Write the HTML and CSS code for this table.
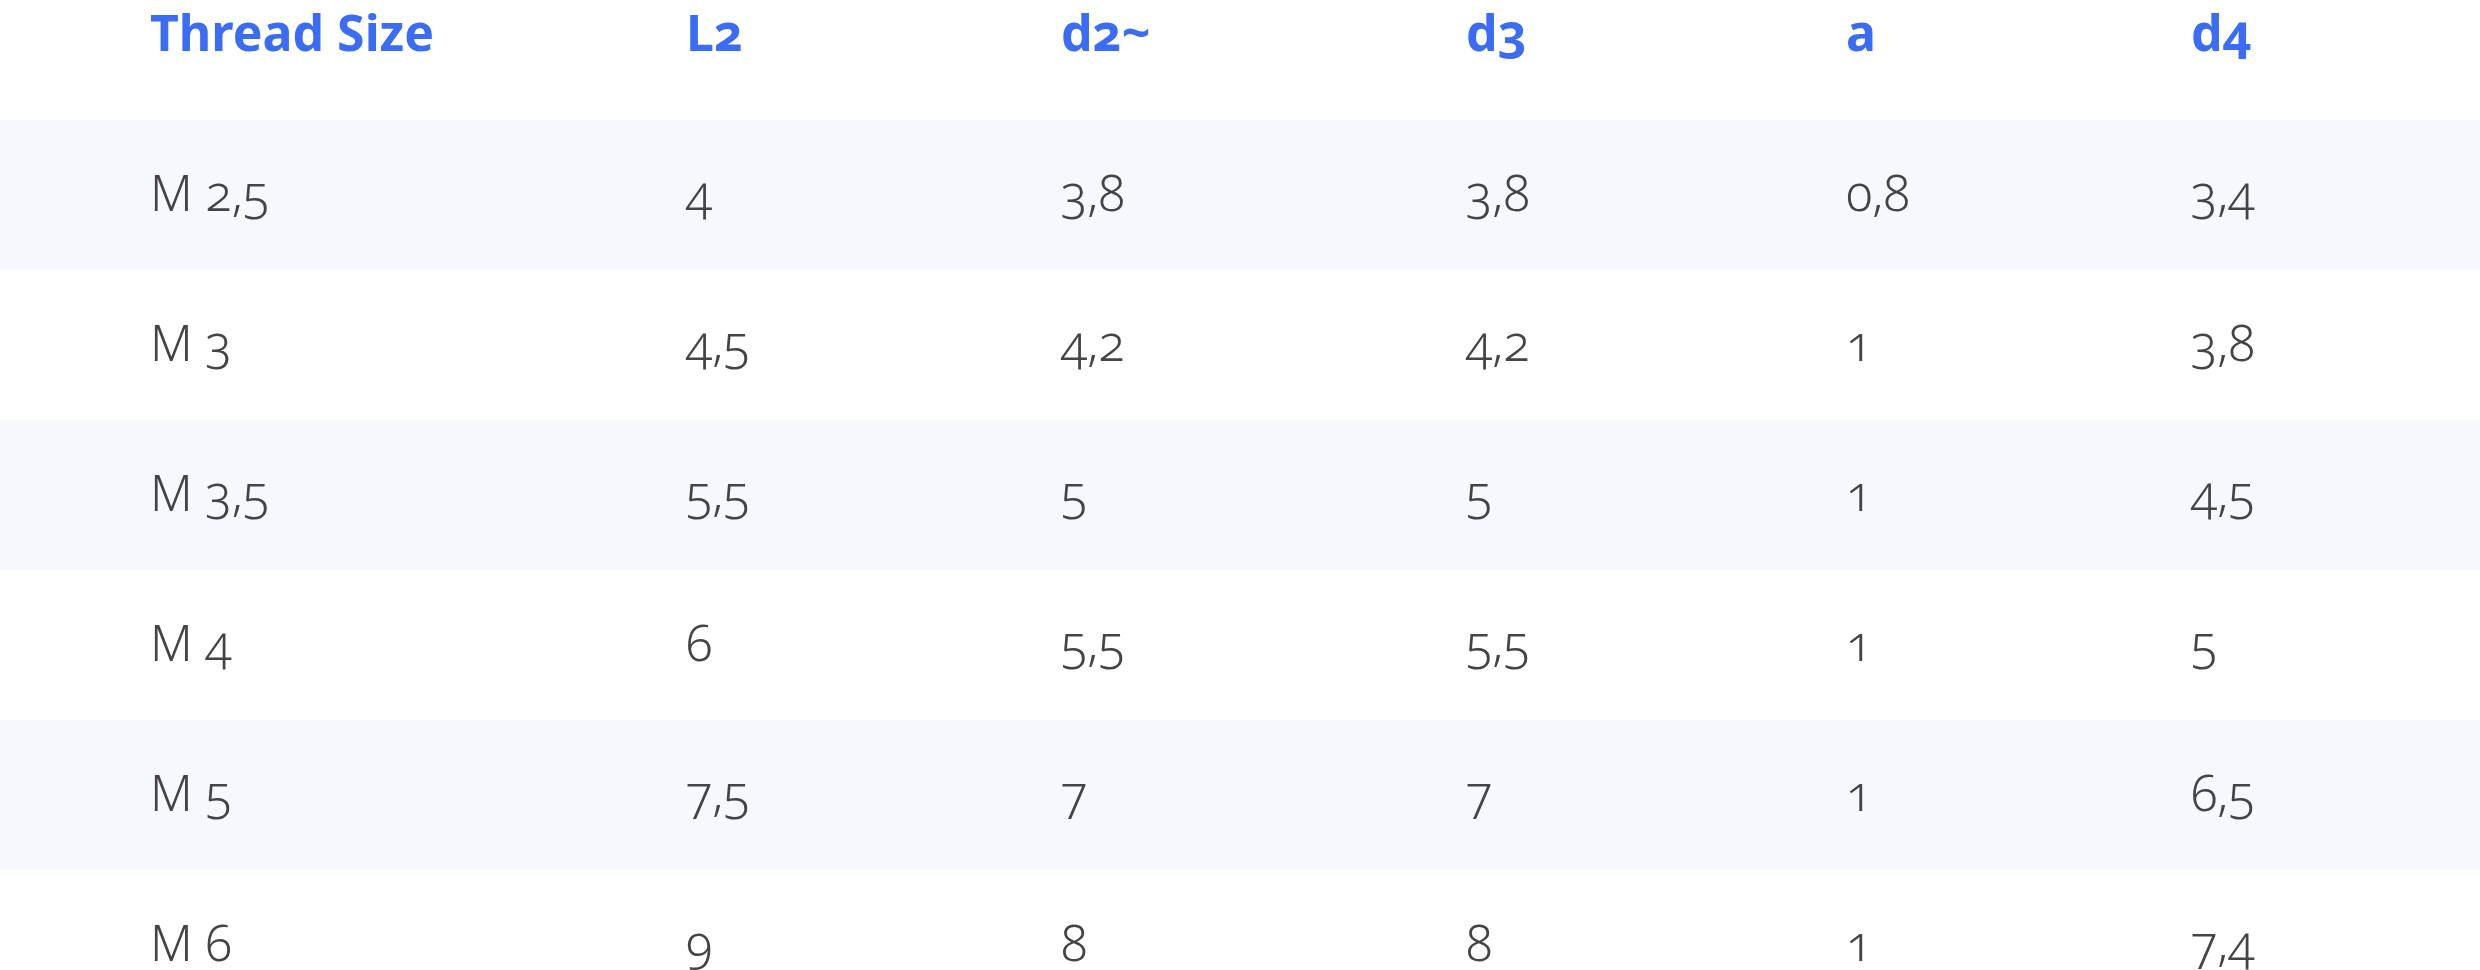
FILE: index.html
```html
<!DOCTYPE html>
<html>
<head>
<meta charset="utf-8">
<link rel="stylesheet" href="styles.css">
</head>
<body>
<div class="table">
  <div class="row head">
    <div class="cell">Thread Size</div>
    <div class="cell">L2</div>
    <div class="cell">d2~</div>
    <div class="cell">d3</div>
    <div class="cell">a</div>
    <div class="cell">d4</div>
  </div>
  <div class="row odd">
    <div class="cell">M 2,5</div><div class="cell">4</div><div class="cell">3,8</div><div class="cell">3,8</div><div class="cell">0,8</div><div class="cell">3,4</div>
  </div>
  <div class="row">
    <div class="cell">M 3</div><div class="cell">4,5</div><div class="cell">4,2</div><div class="cell">4,2</div><div class="cell">1</div><div class="cell">3,8</div>
  </div>
  <div class="row odd">
    <div class="cell">M 3,5</div><div class="cell">5,5</div><div class="cell">5</div><div class="cell">5</div><div class="cell">1</div><div class="cell">4,5</div>
  </div>
  <div class="row">
    <div class="cell">M 4</div><div class="cell">6</div><div class="cell">5,5</div><div class="cell">5,5</div><div class="cell">1</div><div class="cell">5</div>
  </div>
  <div class="row odd">
    <div class="cell">M 5</div><div class="cell">7,5</div><div class="cell">7</div><div class="cell">7</div><div class="cell">1</div><div class="cell">6,5</div>
  </div>
  <div class="row">
    <div class="cell">M 6</div><div class="cell">9</div><div class="cell">8</div><div class="cell">8</div><div class="cell">1</div><div class="cell">7,4</div>
  </div>
</div>
</body>
</html>
```

FILE: styles.css
```css
html, body {
  margin: 0;
  padding: 0;
  background: #ffffff;
}
body {
  font-family: "Noto Sans", "Open Sans", sans-serif;
  overflow: hidden;
}
.table {
  display: flex;
  flex-direction: column;
}
.row {
  display: grid;
  grid-template-columns: 536px 375px 405px 380px 345px 1fr;
  padding-left: 150px;
  height: 150px;
  align-items: center;
  font-size: 49px;
  font-weight: 300;
  line-height: 1;
  color: #444448;
  font-variant-numeric: oldstyle-nums;
  padding-bottom: 6px;
  box-sizing: border-box;
}
.row.odd {
  background: #f5f8fd;
}
.row.head {
  height: 120px;
  align-items: start;
  padding-top: 7px;
  padding-bottom: 0;
  font-size: 50px;
  font-weight: 700;
  color: #3b6cf5;
}
```
